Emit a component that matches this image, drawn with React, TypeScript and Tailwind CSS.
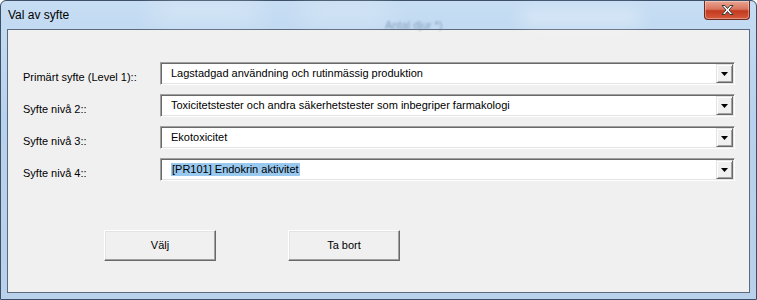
import React from "react";

const rows = [
  { label: "Primärt syfte (Level 1)::", value: "Lagstadgad användning och rutinmässig produktion" },
  { label: "Syfte nivå 2::", value: "Toxicitetstester och andra säkerhetstester som inbegriper farmakologi" },
  { label: "Syfte nivå 3::", value: "Ekotoxicitet" },
  { label: "Syfte nivå 4::", value: "[PR101] Endokrin aktivitet", selected: true },
];

function Combo({ value, selected }: { value: string; selected?: boolean }) {
  return (
    <div className="flex h-[23px] w-[575px] border border-t-[#a0a0a0] border-l-[#a0a0a0] border-b-white border-r-white bg-white shadow-[inset_1px_1px_0_#696969,inset_-1px_-1px_0_#e3e3e3] p-[1px]">
      <div className="flex flex-1 items-center pl-[9px]">
        <span className={selected ? "bg-[#99c9ef] px-px leading-[13px]" : "leading-[13px]"}>{value}</span>
      </div>
      <div className="flex h-[19px] w-[17px] items-center justify-center border border-t-[#e3e3e3] border-l-[#e3e3e3] border-b-[#696969] border-r-[#696969] bg-[#f0f0f0] shadow-[inset_1px_1px_0_#ffffff,inset_-1px_-1px_0_#a0a0a0]">
        <svg width="7" height="4" viewBox="0 0 7 4">
          <path d="M0 0h7L3.5 4z" fill="#000" />
        </svg>
      </div>
    </div>
  );
}

function Button({ children }: { children: React.ReactNode }) {
  return (
    <button className="flex h-[31px] w-[112px] items-center justify-center border border-t-white border-l-white border-b-[#696969] border-r-[#696969] bg-[#f0f0f0] shadow-[inset_-1px_-1px_0_#a0a0a0,inset_1px_1px_0_#e3e3e3] text-[11px] text-black">
      {children}
    </button>
  );
}

export default function App() {
  return (
    <div className="h-[300px] w-[757px] overflow-hidden bg-white">
      <div className="relative flex h-[300px] w-[757px] flex-col rounded-tl-[6px] rounded-tr-[6px] border border-[#3c4f66] bg-[linear-gradient(180deg,#c6ddf3_0%,#b7d2ee_40%,#b9d1ea_100%)] font-['Liberation_Sans',Arial,sans-serif] text-black">
        {/* glass blur behind the title */}
        <div className="pointer-events-none absolute left-[150px] top-[2px] h-[16px] w-[110px] rounded-full bg-white/40 blur-md" />
        <div className="pointer-events-none absolute left-[300px] top-[4px] h-[14px] w-[90px] rounded-full bg-white/40 blur-md" />
        <div className="pointer-events-none absolute left-[520px] top-[6px] h-[20px] w-[120px] rounded-sm bg-white/30 blur-sm" />
        <div className="pointer-events-none absolute left-[384px] top-[16px] text-[11px] text-[#6d86a4] opacity-70 blur-[1px]">Antal djur *)</div>

        {/* title bar */}
        <div className="relative flex h-[28px] items-start">
          <div className="pl-[7px] pt-[7px] text-[12px] leading-[15px] text-black">Val av syfte</div>
          <div className="ml-auto mr-[6px] flex h-[19px] w-[46px] items-center justify-center rounded-b-[4px] border border-t-0 border-[#6e2a20] bg-[linear-gradient(180deg,#e9a592_0%,#d9755f_45%,#c23a1f_55%,#d65a3c_100%)] shadow-[inset_0_0_0_1px_rgba(255,255,255,0.35)]">
            <svg width="15" height="12" viewBox="0 0 15 12">
              <path d="M2 1.5h3l2.5 3 2.5-3h3l-4 4.5 4 4.5h-3l-2.5-3-2.5 3h-3l4-4.5z" fill="#ffffff" stroke="#3b3b3b" strokeWidth="1" strokeLinejoin="round" />
            </svg>
          </div>
        </div>

        {/* client area */}
        <div className="mx-[6px] mb-[6px] flex flex-1 flex-col border border-[#5a6a7c] bg-[#f0f0f0] pl-[15px] pt-[32px]">
          <div className="flex flex-col gap-[9px]">
            {rows.map((r) => (
              <div key={r.label} className="flex items-start text-[11px]">
                <div className="w-[137px] pt-[9px] leading-[13px]">{r.label}</div>
                <Combo value={r.value} selected={r.selected} />
              </div>
            ))}
          </div>
          <div className="mt-[49px] flex gap-[72px] pl-[81px]">
            <Button>Välj</Button>
            <Button>Ta bort</Button>
          </div>
        </div>
      </div>
    </div>
  );
}
